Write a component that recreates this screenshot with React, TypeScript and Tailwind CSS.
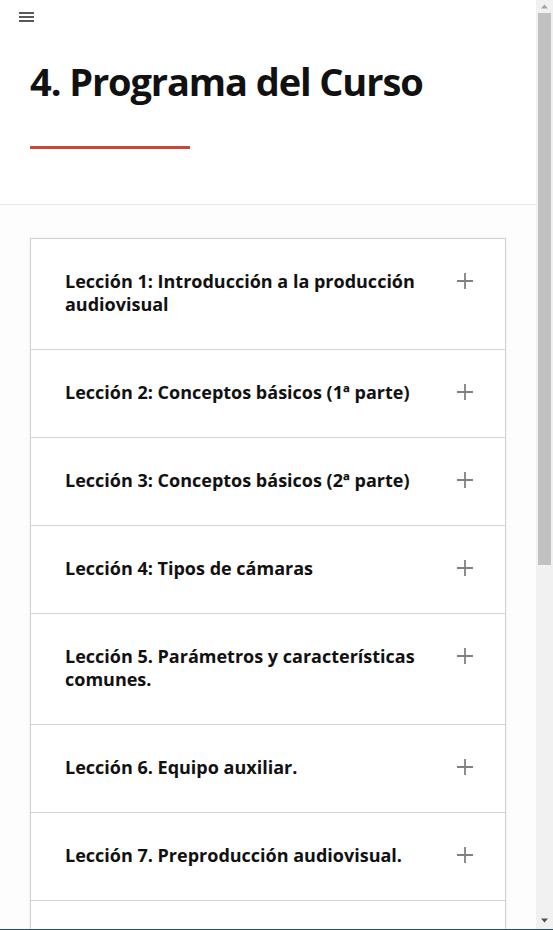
const lessons = [
  "Lección 1: Introducción a la producción audiovisual",
  "Lección 2: Conceptos básicos (1ª parte)",
  "Lección 3: Conceptos básicos (2ª parte)",
  "Lección 4: Tipos de cámaras",
  "Lección 5. Parámetros y características comunes.",
  "Lección 6. Equipo auxiliar.",
  "Lección 7. Preproducción audiovisual.",
  "Lección 8. Producción y rodaje.",
  "Lección 9. Postproducción audiovisual.",
];

function Scrollbar() {
  // window scrollbar as it appears in the screenshot
  return (
    <div className="flex w-[17px] shrink-0 flex-col items-center bg-[#f1f1f1]">
      <svg width="17" height="13" viewBox="0 0 17 13" className="shrink-0">
        <path d="M5 8.5h7L8.5 4.5z" fill="#a3a3a3" />
      </svg>
      <div className="h-[552px] w-[13px] shrink-0 bg-[#c1c1c1]" />
      <div className="flex-1" />
      <svg width="17" height="16" viewBox="0 0 17 16" className="shrink-0">
        <path d="M5 5.5h7L8.5 9.5z" fill="#505050" />
      </svg>
    </div>
  );
}

export default function App() {
  return (
    <div className="flex h-screen overflow-hidden border-b border-[#1f4e5c] bg-white text-[#111] font-['Open_Sans',sans-serif]">
      <div className="min-w-0 flex-1">
        {/* Top bar */}
        <div className="h-[57px] pt-[12px] pl-[19px]">
          <button className="block" aria-label="Menú">
            <svg width="15" height="10" viewBox="0 0 15 10" fill="none">
              <path d="M0 1h15M0 5h15M0 9h15" stroke="#222" strokeWidth="1.5" />
            </svg>
          </button>
        </div>

        {/* Title */}
        <div className="border-b border-[#e8e8e8] pb-[55px]">
          <h1 className="px-[30px] text-[38px] leading-[48px] font-bold tracking-[-1.1px]">
            4. Programa del Curso
          </h1>
          <div className="ml-[30px] mt-[41px] h-[3px] w-[160px] bg-[#c8473d]" />
        </div>

        {/* Accordion */}
        <div className="bg-[#fdfdfd] px-[30px] pt-[33px] pb-[40px]">
          <div className="border border-[#cfcfcf] bg-white shadow-[0_0_6px_rgba(0,0,0,0.04)]">
            {lessons.map((title) => (
              <div
                key={title}
                className="flex gap-[30px] border-b border-[#d4d4d4] pt-[31px] pb-[33px] pl-[34px] pr-[32px] last:border-b-0"
              >
                <span className="flex-1 text-[18px] leading-[23px] font-bold">
                  {title}
                </span>
                <svg
                  width="16"
                  height="16"
                  viewBox="0 0 16 16"
                  className="mt-[3px] shrink-0"
                >
                  <path d="M8 0v16M0 8h16" stroke="#808080" strokeWidth="1.8" />
                </svg>
              </div>
            ))}
          </div>
        </div>
      </div>
      <Scrollbar />
    </div>
  );
}
